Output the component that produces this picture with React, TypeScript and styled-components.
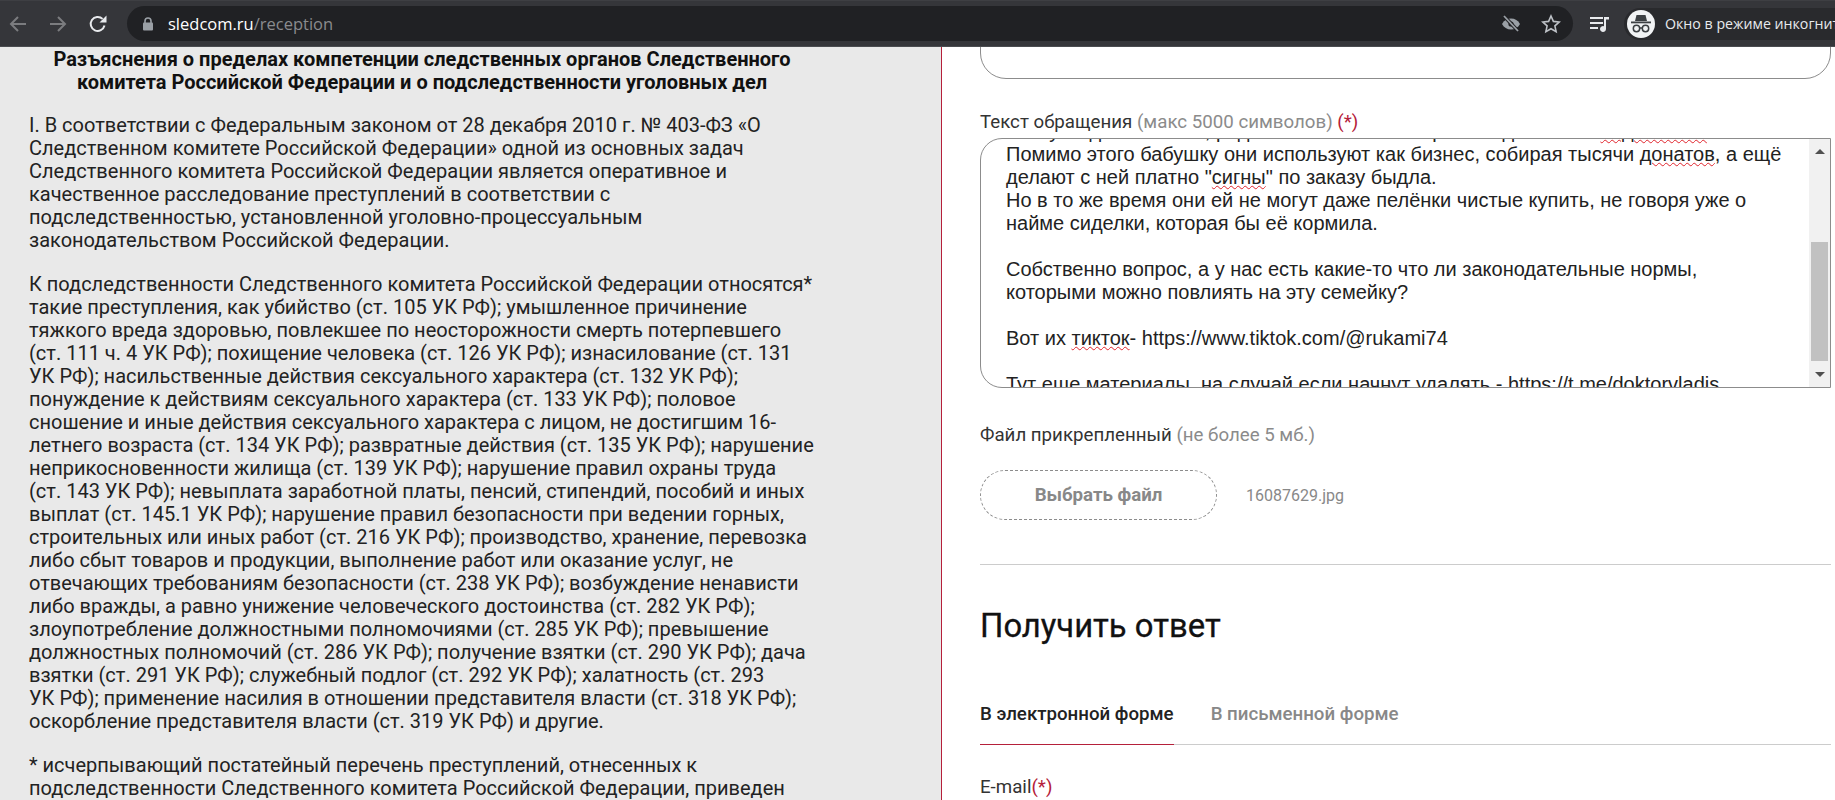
import React from "react";
import styled, { createGlobalStyle } from "styled-components";

const GlobalStyle = createGlobalStyle`
  html, body { margin: 0; padding: 0; height: 800px; overflow: hidden; background: #fff; }
  * { box-sizing: border-box; }
`;

const Page = styled.div`
  width: 1835px;
  height: 800px;
  display: flex;
  flex-direction: column;
  overflow: hidden;
  font-family: Roboto, sans-serif;
`;

const Toolbar = styled.div`
  height: 47px;
  flex: none;
  display: flex;
  align-items: center;
  gap: 4px;
  background: #35363a;
  border-top: 1px solid #3e3f43;
  border-bottom: 1px solid #4a4c50;
`;

const NavButton = styled.div`
  width: 36px;
  height: 32px;
  display: flex;
  align-items: center;
  justify-content: center;
  flex: none;
`;

const Omnibox = styled.div`
  width: 1446px;
  height: 35px;
  margin: 0 5px 0 7px;
  border-radius: 18px;
  background: #202124;
  display: flex;
  align-items: center;
  padding-left: 15px;
  flex: none;
`;

const Url = styled.div`
  margin-left: 14px;
  font: 400 16.5px "Open Sans", sans-serif;
  color: #fff;
  flex: 1;
  span { color: #8a8b8e; }
`;

const OmniIcon = styled.div<{ $gap?: number }>`
  width: 40px;
  display: flex;
  justify-content: center;
  margin-right: ${(p) => p.$gap ?? 0}px;
`;

const Profile = styled.div`
  margin-left: 2px;
  flex: 1;
  height: 32px;
  display: flex;
  align-items: center;
  background: #292a2d;
  border-radius: 16px 0 0 16px;
  padding-left: 3px;
  color: #e8eaed;
  font: 400 14.2px "Open Sans", sans-serif;
  white-space: nowrap;
  overflow: hidden;
`;

const Avatar = styled.div`
  width: 28px;
  height: 28px;
  border-radius: 50%;
  background: #f1f3f4;
  display: flex;
  align-items: center;
  justify-content: center;
  margin-right: 10px;
  flex: none;
`;

const Body = styled.div`
  flex: 1;
  display: flex;
  min-height: 0;
`;

const Info = styled.aside`
  width: 942px;
  flex: none;
  background: #e9e9e9;
  border-right: 1px solid #b5203a;
  padding: 1px 0 0 29px;
  overflow: hidden;
  color: #222;
  font-size: 20px;
  line-height: 23px;
`;

const InfoTitle = styled.h2`
  margin: 0 0 20px;
  width: 786px;
  text-align: center;
  font-size: 20px;
  line-height: 23px;
  font-weight: 700;
  color: #111;
  white-space: nowrap;
`;

const InfoPara = styled.p`
  margin: 0 0 21px;
  white-space: pre;
`;

const Form = styled.main`
  flex: 1;
  min-width: 0;
  padding-left: 38px;
  overflow: hidden;
`;

const CutInput = styled.div`
  height: 60px;
  margin-top: -28px;
  width: 851px;
  border: 1px solid #8c8c8c;
  border-radius: 26px;
`;

const Label = styled.div<{ $top: number }>`
  margin-top: ${(p) => p.$top}px;
  font-size: 18.7px;
  line-height: 22px;
  color: #333;
  white-space: nowrap;
`;

const Hint = styled.span`
  color: #8b8b8b;
`;

const Req = styled.span`
  color: #b5203a;
`;

const TextArea = styled.div`
  margin-top: 5px;
  width: 851px;
  height: 250px;
  border: 1px solid #8c8c8c;
  border-radius: 22px 0 0 22px;
  position: relative;
  overflow: hidden;
`;

const TextContent = styled.div`
  margin-top: -19px;
  padding-left: 25px;
  font: 400 20px/23px "Liberation Sans", sans-serif;
  color: #222;
  white-space: pre;
`;

const Typo = styled.span`
  text-decoration: underline wavy #e0242c 1px;
  text-underline-offset: 1px;
`;

const Scrollbar = styled.div`
  position: absolute;
  top: 0;
  right: 0;
  bottom: 0;
  width: 21px;
  background: #f1f1f1;
  display: flex;
  flex-direction: column;
  align-items: center;
  justify-content: space-between;
  padding: 10px 0;
`;

const Thumb = styled.div`
  position: absolute;
  left: 2px;
  right: 2px;
  top: 103px;
  height: 119px;
  background: #c1c1c1;
`;

const ArrowUp = styled.div`
  width: 0;
  height: 0;
  border-left: 5px solid transparent;
  border-right: 5px solid transparent;
  border-bottom: 5px solid #505050;
`;

const ArrowDown = styled(ArrowUp)`
  border-bottom: 0;
  border-top: 5px solid #505050;
`;

const FileRow = styled.div`
  margin-top: 24px;
  display: flex;
  align-items: center;
`;

const FileButton = styled.div`
  width: 237px;
  height: 50px;
  border: 1px dashed #8c8c8c;
  border-radius: 25px;
  display: flex;
  align-items: center;
  justify-content: center;
  font-size: 18.7px;
  font-weight: 700;
  color: #888;
  flex: none;
`;

const FileName = styled.div`
  margin-left: 29px;
  font-size: 16px;
  color: #888;
`;

const Divider = styled.div`
  margin-top: 44px;
  height: 1px;
  width: 851px;
  background: #ccc;
`;

const Heading = styled.h1`
  margin: 40px 0 0;
  font-size: 32.8px;
  line-height: 42px;
  font-weight: 400;
  color: #111;
  -webkit-text-stroke: 0.3px #111;
`;

const Tabs = styled.div`
  margin-top: 52px;
  width: 851px;
  height: 46px;
  display: flex;
  gap: 37px;
  border-bottom: 1px solid #ccc;
`;

const Tab = styled.div<{ $active?: boolean }>`
  font-size: 18.7px;
  font-weight: 500;
  line-height: 30px;
  color: ${(p) => (p.$active ? "#222" : "#888")};
  border-bottom: ${(p) => (p.$active ? "1px solid #b5203a" : "0")};
  height: 46px;
`;

const Arrow = ({ back }: { back?: boolean }) => (
  <svg width="18" height="18" viewBox="0 0 18 18" fill="none" stroke="#7b7c7f" strokeWidth="2">
    {back ? <path d="M17 9H2M9 2 2 9l7 7" /> : <path d="M1 9h15M9 2l7 7-7 7" />}
  </svg>
);

const Reload = () => (
  <svg width="20" height="20" viewBox="0 0 20 20" fill="none">
    <path d="M16.5 11.5A7 7 0 1 1 14.6 4.9" stroke="#e8eaed" strokeWidth="2" />
    <path d="M11.5 8.5h7v-7z" fill="#e8eaed" />
  </svg>
);

const Lock = () => (
  <svg width="12" height="14" viewBox="0 0 12 14">
    <path d="M3 6V4a3 3 0 0 1 6 0v2" fill="none" stroke="#9aa0a6" strokeWidth="1.6" />
    <rect x="1" y="5.5" width="10" height="8" rx="1" fill="#9aa0a6" />
  </svg>
);

const EyeOff = () => (
  <svg width="20" height="18" viewBox="0 0 20 18">
    <path d="M1 9c2-3.6 5-5.5 9-5.500s7 1.900 9 5.500c-2 3.600-5 5.500-9 5.500S3 12.600 1 9z" fill="#9aa0a6" />
    <circle cx="10" cy="9" r="2.600" fill="#202124" />
    <path d="M3 1l14 15" stroke="#202124" strokeWidth="3.500" />
    <path d="M3 1l14 15" stroke="#9aa0a6" strokeWidth="1.800" />
  </svg>
);

const Star = () => (
  <svg width="20" height="20" viewBox="0 0 20 20" fill="none" stroke="#bdc1c6" strokeWidth="1.600">
    <path d="M10 2l2.400 5.400 5.800.6-4.300 3.900 1.200 5.700L10 14.700l-5.100 2.900 1.200-5.700L1.800 8l5.800-.6z" />
  </svg>
);

const Queue = () => (
  <svg width="22" height="18" viewBox="0 0 22 18" fill="#e8eaed">
    <rect x="1" y="2" width="13" height="2" />
    <rect x="1" y="7" width="13" height="2" />
    <rect x="1" y="12" width="8" height="2" />
    <path d="M15 2h5v2.500h-3V14a3 3 0 1 1-2-2.800z" />
  </svg>
);

const Incognito = () => (
  <svg width="24" height="22" viewBox="0 0 24 22">
    <path d="M7.500 2h9l1.500 6H6z" fill="#3c4043" />
    <rect x="2" y="8.500" width="20" height="1.800" fill="#3c4043" />
    <circle cx="7.500" cy="15.500" r="3.200" fill="none" stroke="#3c4043" strokeWidth="1.500" />
    <circle cx="16.500" cy="15.500" r="3.200" fill="none" stroke="#3c4043" strokeWidth="1.500" />
    <path d="M10.500 15h3" stroke="#3c4043" strokeWidth="1.500" />
  </svg>
);

const intro = `I. В соответствии с Федеральным законом от 28 декабря 2010 г. № 403-ФЗ «О
Следственном комитете Российской Федерации» одной из основных задач
Следственного комитета Российской Федерации является оперативное и
качественное расследование преступлений в соответствии с
подследственностью, установленной уголовно-процессуальным
законодательством Российской Федерации.`;

const list = `К подследственности Следственного комитета Российской Федерации относятся*
такие преступления, как убийство (ст. 105 УК РФ); умышленное причинение
тяжкого вреда здоровью, повлекшее по неосторожности смерть потерпевшего
(ст. 111 ч. 4 УК РФ); похищение человека (ст. 126 УК РФ); изнасилование (ст. 131
УК РФ); насильственные действия сексуального характера (ст. 132 УК РФ);
понуждение к действиям сексуального характера (ст. 133 УК РФ); половое
сношение и иные действия сексуального характера с лицом, не достигшим 16-
летнего возраста (ст. 134 УК РФ); развратные действия (ст. 135 УК РФ); нарушение
неприкосновенности жилища (ст. 139 УК РФ); нарушение правил охраны труда
(ст. 143 УК РФ); невыплата заработной платы, пенсий, стипендий, пособий и иных
выплат (ст. 145.1 УК РФ); нарушение правил безопасности при ведении горных,
строительных или иных работ (ст. 216 УК РФ); производство, хранение, перевозка
либо сбыт товаров и продукции, выполнение работ или оказание услуг, не
отвечающих требованиям безопасности (ст. 238 УК РФ); возбуждение ненависти
либо вражды, а равно унижение человеческого достоинства (ст. 282 УК РФ);
злоупотребление должностными полномочиями (ст. 285 УК РФ); превышение
должностных полномочий (ст. 286 УК РФ); получение взятки (ст. 290 УК РФ); дача
взятки (ст. 291 УК РФ); служебный подлог (ст. 292 УК РФ); халатность (ст. 293
УК РФ); применение насилия в отношении представителя власти (ст. 318 УК РФ);
оскорбление представителя власти (ст. 319 УК РФ) и другие.`;

const note = `* исчерпывающий постатейный перечень преступлений, отнесенных к
подследственности Следственного комитета Российской Федерации, приведен`;

export default function App() {
  return (
    <Page>
      <GlobalStyle />
      <Toolbar>
        <NavButton><Arrow back /></NavButton>
        <NavButton><Arrow /></NavButton>
        <NavButton><Reload /></NavButton>
        <Omnibox>
          <Lock />
          <Url>sledcom.ru<span>/reception</span></Url>
          <OmniIcon><EyeOff /></OmniIcon>
          <OmniIcon $gap={2}><Star /></OmniIcon>
        </Omnibox>
        <NavButton><Queue /></NavButton>
        <Profile>
          <Avatar><Incognito /></Avatar>
          Окно в режиме инкогнито
        </Profile>
      </Toolbar>
      <Body>
        <Info>
          <InfoTitle>
            Разъяснения о пределах компетенции следственных органов Следственного
            <br />
            комитета Российской Федерации и о подследственности уголовных дел
          </InfoTitle>
          <InfoPara>{intro}</InfoPara>
          <InfoPara>{list}</InfoPara>
          <InfoPara>{note}</InfoPara>
        </Info>
        <Form>
          <CutInput />
          <Label $top={32}>
            Текст обращения <Hint>(макс 5000 символов)</Hint> <Req>(*)</Req>
          </Label>
          <TextArea>
            <TextContent>
              Она уже давно лежит, родные снимают с ней ролики для своих <Typo>подписчики</Typo>{"\n"}
              Помимо этого бабушку они используют как бизнес, собирая тысячи <Typo>донатов</Typo>, а ещё{"\n"}
              делают с ней платно "<Typo>сигны</Typo>" по заказу быдла.{"\n"}
              Но в то же время они ей не могут даже пелёнки чистые купить, не говоря уже о{"\n"}
              найме сиделки, которая бы её кормила.{"\n"}
              {"\n"}
              Собственно вопрос, а у нас есть какие-то что ли законодательные нормы,{"\n"}
              которыми можно повлиять на эту семейку?{"\n"}
              {"\n"}
              Вот их <Typo>тикток</Typo>- https://www.tiktok.com/@rukami74{"\n"}
              {"\n"}
              Тут еще материалы, на случай если начнут удалять - https://t.me/doktorvladis
            </TextContent>
            <Scrollbar>
              <ArrowUp />
              <Thumb />
              <ArrowDown />
            </Scrollbar>
          </TextArea>
          <Label $top={36}>
            Файл прикрепленный <Hint>(не более 5 мб.)</Hint>
          </Label>
          <FileRow>
            <FileButton>Выбрать файл</FileButton>
            <FileName>16087629.jpg</FileName>
          </FileRow>
          <Divider />
          <Heading>Получить ответ</Heading>
          <Tabs>
            <Tab $active>В электронной форме</Tab>
            <Tab>В письменной форме</Tab>
          </Tabs>
          <Label $top={31}>
            E-mail<Req>(*)</Req>
          </Label>
        </Form>
      </Body>
    </Page>
  );
}
